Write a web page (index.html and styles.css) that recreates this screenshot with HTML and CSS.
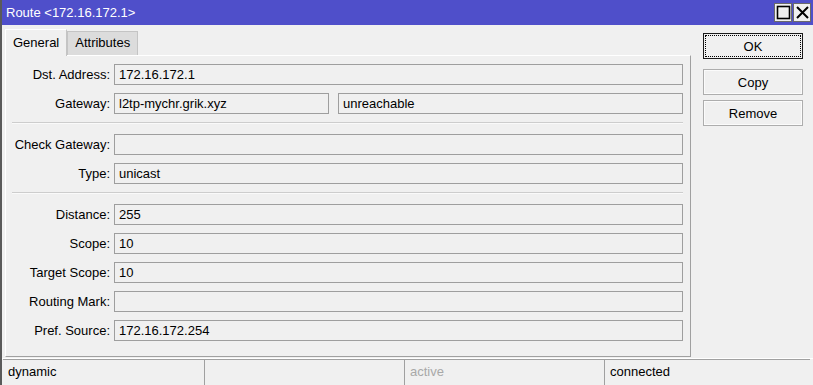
FILE: index.html
```html
<!DOCTYPE html>
<html lang="en">
<head>
  <meta charset="UTF-8">
  <title>Route &lt;172.16.172.1&gt;</title>
  <link rel="stylesheet" href="styles.css">
</head>
<body>
  <div class="window">
      <div class="titlebar">
          <span class="title">Route &lt;172.16.172.1&gt;</span>
          <div class="win-btns">
              <span class="win-btn">
                  <svg width="15" height="15" viewBox="0 0 15 15"><rect x="1.5" y="1.5" width="12" height="12" fill="none" stroke="#000" stroke-width="1.6"/></svg>
              </span>
              <span class="win-btn">
                  <svg width="15" height="15" viewBox="0 0 15 15"><path d="M2 2 L13 13 M13 2 L2 13" stroke="#000" stroke-width="2"/></svg>
              </span>
          </div>
      </div>

      <div class="main">
          <div class="left">
              <div class="tabs">
                  <div class="tab active">General</div>
                  <div class="tab">Attributes</div>
              </div>
              <div class="panel">
                  <div class="row">
                      <label>Dst. Address:</label>
                      <div class="field">172.16.172.1</div>
                  </div>
                  <div class="row">
                      <label>Gateway:</label>
                      <div class="field gw">l2tp-mychr.grik.xyz</div>
                      <div class="field">unreachable</div>
                  </div>
                  <div class="sep"></div>
                  <div class="row">
                      <label>Check Gateway:</label>
                      <div class="field"></div>
                  </div>
                  <div class="row">
                      <label>Type:</label>
                      <div class="field">unicast</div>
                  </div>
                  <div class="sep"></div>
                  <div class="row">
                      <label>Distance:</label>
                      <div class="field">255</div>
                  </div>
                  <div class="row">
                      <label>Scope:</label>
                      <div class="field">10</div>
                  </div>
                  <div class="row">
                      <label>Target Scope:</label>
                      <div class="field">10</div>
                  </div>
                  <div class="row">
                      <label>Routing Mark:</label>
                      <div class="field"></div>
                  </div>
                  <div class="row">
                      <label>Pref. Source:</label>
                      <div class="field">172.16.172.254</div>
                  </div>
              </div>
          </div>

          <div class="actions">
              <button class="btn btn-default">OK</button>
              <button class="btn">Copy</button>
              <button class="btn">Remove</button>
          </div>
      </div>

      <div class="statusbar">
          <div class="cell">dynamic</div>
          <div class="cell"></div>
          <div class="cell muted">active</div>
          <div class="cell">connected</div>
      </div>
  </div>
</body>
</html>
```

FILE: styles.css
```css
* {
    margin: 0;
    padding: 0;
    box-sizing: border-box;
}

body {
    font-family: 'Liberation Sans', Arial, sans-serif;
    font-size: 13px;
    color: #000;
    background: #f0f0f0;
}

.window {
    width: 813px;
    height: 385px;
    display: flex;
    flex-direction: column;
    background: #f0f0f0;
    border-left: 2px solid #5a5a5a;
    overflow: hidden;
}

.titlebar {
    height: 25px;
    background: #4f4fca;
    display: flex;
    align-items: center;
    justify-content: space-between;
    padding: 0 2px 0 4px;
    flex-shrink: 0;
}

.title {
    color: #fff;
    font-size: 13px;
}

.win-btns {
    display: flex;
    gap: 1px;
}

.win-btn {
    width: 18px;
    height: 19px;
    background: #f0f0f0;
    border: 1px solid #6a6a6a;
    display: flex;
    align-items: center;
    justify-content: center;
}

.main {
    flex: 1;
    display: flex;
    padding: 3px 10px 0 3px;
    gap: 12px;
}

.left {
    width: 686px;
    display: flex;
    flex-direction: column;
}

.tabs {
    display: flex;
    align-items: flex-end;
    height: 27px;
}

.tab {
    height: 24px;
    padding: 0 7px;
    line-height: 22px;
    background: #dcdcdc;
    border: 1px solid #c4c4c4;
    border-bottom: none;
}

.tab.active {
    height: 27px;
    line-height: 26px;
    background: #f0f0f0;
    border-color: #fff #c4c4c4 #fff #fff;
    position: relative;
    top: 1px;
}

.panel {
    height: 302px;
    border-top: 1px solid #fff;
    border-left: 1px solid #fff;
    border-right: 1px solid #a0a0a0;
    border-bottom: 1px solid #a0a0a0;
    padding: 8px 7px 0 6px;
    display: flex;
    flex-direction: column;
}

.row {
    display: flex;
    height: 21px;
    margin-bottom: 8px;
    gap: 9px;
}

.row label {
    width: 98px;
    margin-right: -5px;
    text-align: right;
    line-height: 21px;
    white-space: nowrap;
}

.field {
    flex: 1;
    height: 21px;
    border: 1px solid #9e9e9e;
    background: #f0f0f0;
    padding-left: 4px;
    line-height: 19px;
    white-space: nowrap;
}

.field.gw {
    flex: 0 0 215px;
}

.sep {
    height: 2px;
    border-top: 1px solid #cdcdcd;
    border-bottom: 1px solid #fafafa;
    margin: 0 0 10px;
}

.actions {
    width: 100px;
    display: flex;
    flex-direction: column;
    padding-top: 5px;
}

.btn {
    height: 26px;
    font-family: 'Liberation Sans', Arial, sans-serif;
    font-size: 13px;
    background: #f0f0f0;
    border: 1px solid #adadad;
    box-shadow: inset 0 0 0 1px #fbfbfb;
    margin-bottom: 5px;
    color: #000;
}

.btn-default {
    border: 1px solid #1a1a1a;
    outline: 1px dotted #000;
    outline-offset: -3px;
    box-shadow: none;
    margin-bottom: 10px;
}

.statusbar {
    height: 27px;
    display: flex;
    flex-shrink: 0;
    padding: 0 3px 0 1px;
    border-top: 1px solid #fff;
}

.cell {
    width: 200px;
    border-top: 1px solid #a0a0a0;
    border-left: 1px solid #a0a0a0;
    padding-left: 5px;
    line-height: 24px;
}

.cell:first-child {
    border-left: none;
    width: 201px;
}

.cell:last-child {
    flex: 1;
}

.cell.muted {
    color: #a8a8a8;
}
```
